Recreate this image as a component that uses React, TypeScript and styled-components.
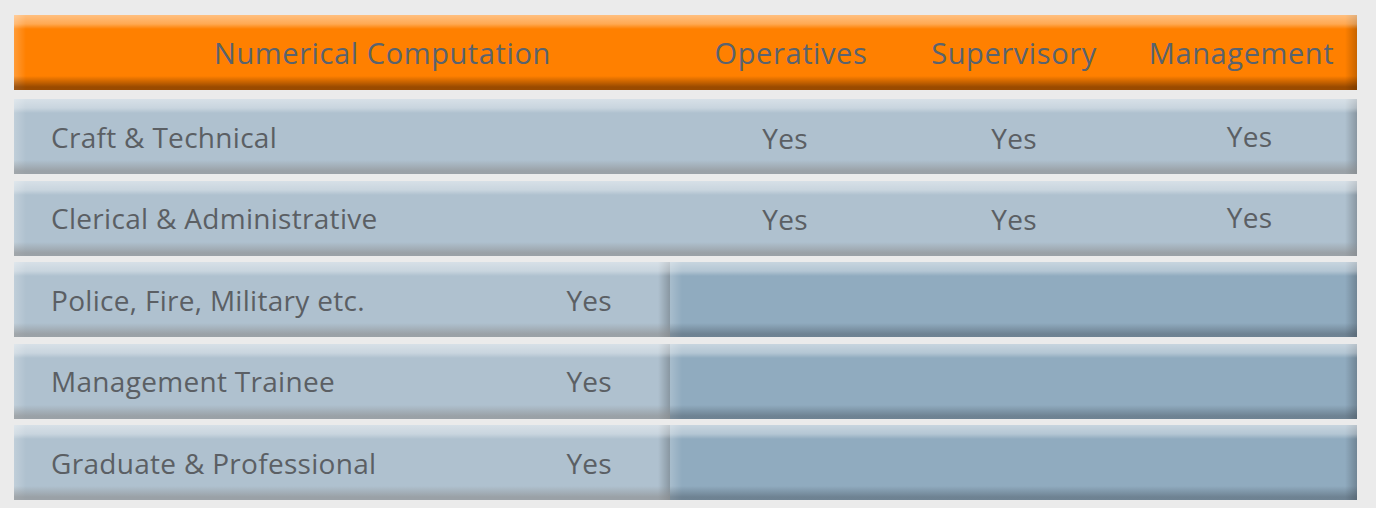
import React from 'react';
import styled, { createGlobalStyle, css } from 'styled-components';

const GlobalStyle = createGlobalStyle`
  html, body {
    margin: 0;
    padding: 0;
    background: #ebebeb;
  }
  body {
    font-family: 'Open Sans', 'Liberation Sans', sans-serif;
  }
`;

const bevel = (base: string, dark: string) => css`
  background:
    linear-gradient(to bottom, rgba(255, 255, 255, 0.5) 0, rgba(255, 255, 255, 0.32) 9px, rgba(255, 255, 255, 0) 14px),
    linear-gradient(to top, ${dark} 0, ${dark} 3px, rgba(0, 0, 0, 0) 14px),
    linear-gradient(to right, rgba(255, 255, 255, 0.22) 0, rgba(255, 255, 255, 0) 12px),
    linear-gradient(to left, rgba(0, 0, 0, 0.22) 0, rgba(0, 0, 0, 0) 12px),
    ${base};
`;

const Page = styled.div`
  width: 1343px;
  padding: 15px 0 0 14px;
`;

const Table = styled.div`
  display: flex;
  flex-direction: column;
  gap: 6.5px;
`;

const columns = '666px 222px 224px 231px';

const HeaderBar = styled.div`
  display: grid;
  grid-template-columns: ${columns};
  align-items: center;
  height: 75px;
  margin-bottom: 2.5px;
  ${bevel('#ff8000', 'rgba(70, 30, 0, 0.55)')}
  color: #59636f;
  font-size: 29px;
  letter-spacing: 0.6px;
`;

const HeaderTitle = styled.div`
  padding-left: 200px;
`;

const HeaderCell = styled.div`
  text-align: center;
`;

const Row = styled.div`
  display: grid;
  grid-template-columns: ${columns};
  align-items: center;
  height: 75px;
  ${bevel('#afc1cf', 'rgba(140, 140, 140, 0.6)')}
  color: #5b5f64;
  font-size: 28px;
  letter-spacing: 0.3px;
`;

const Label = styled.div`
  padding-left: 37px;
`;

const YesCell = styled.div<{ $dx?: number; $dy?: number }>`
  text-align: center;
  transform: translate(${p => p.$dx ?? 0}px, ${p => p.$dy ?? 0}px);
`;

const SplitRow = styled.div`
  display: flex;
  height: 75px;
  font-size: 28px;
  letter-spacing: 0.3px;
  color: #5b5f64;
`;

const SplitLeft = styled.div`
  width: 656px;
  display: flex;
  align-items: center;
  justify-content: space-between;
  padding: 0 58px 0 37px;
  box-sizing: border-box;
  ${bevel('#afc1cf', 'rgba(140, 140, 140, 0.6)')}
`;

const SplitRight = styled.div`
  flex: 1;
  ${bevel('#90abbf', 'rgba(60, 70, 80, 0.4)')}
`;

const fullRows = ['Craft & Technical', 'Clerical & Administrative'];
const splitRows = ['Police, Fire, Military etc.', 'Management Trainee', 'Graduate & Professional'];

export default function App() {
  return (
    <>
      <GlobalStyle />
      <Page>
        <Table>
          <HeaderBar>
            <HeaderTitle>Numerical Computation</HeaderTitle>
            <HeaderCell>Operatives</HeaderCell>
            <HeaderCell>Supervisory</HeaderCell>
            <HeaderCell>Management</HeaderCell>
          </HeaderBar>
          {fullRows.map(label => (
            <Row key={label}>
              <Label>{label}</Label>
              <YesCell $dx={-6} $dy={1}>Yes</YesCell>
              <YesCell $dy={1}>Yes</YesCell>
              <YesCell $dx={8} $dy={-1}>Yes</YesCell>
            </Row>
          ))}
          {splitRows.map(label => (
            <SplitRow key={label}>
              <SplitLeft>
                <span>{label}</span>
                <span>Yes</span>
              </SplitLeft>
              <SplitRight />
            </SplitRow>
          ))}
        </Table>
      </Page>
    </>
  );
}
